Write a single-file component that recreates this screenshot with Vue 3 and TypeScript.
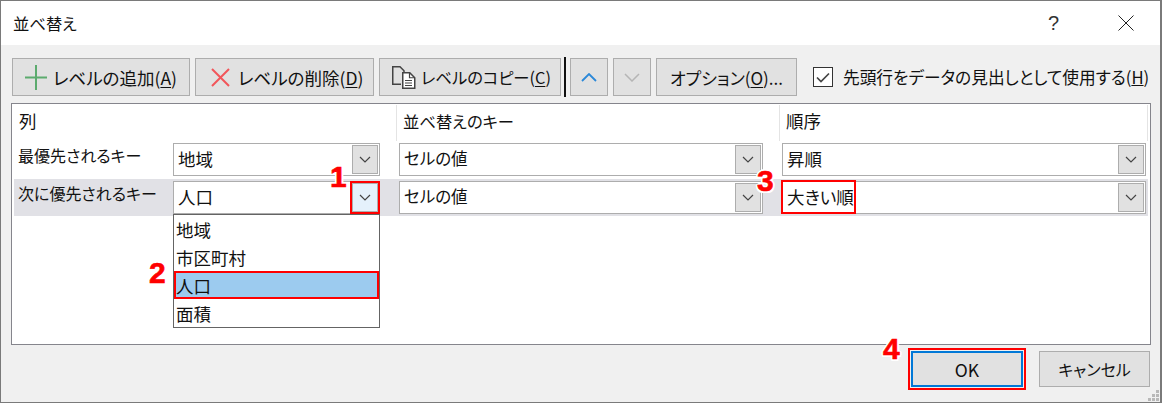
<script setup lang="ts">
interface SortRow {
  label: string
  column: string
  keyType: string
  order: string
  active?: boolean
}

const rows: SortRow[] = [
  { label: '最優先されるキー', column: '地域', keyType: 'セルの値', order: '昇順' },
  { label: '次に優先されるキー', column: '人口', keyType: 'セルの値', order: '大きい順', active: true }
]

const options = ['地域', '市区町村', '人口', '面積']
const gripDots = [
  [2, 0], [1, 1], [2, 1], [0, 2], [1, 2], [2, 2]
]
</script>

<template>
  <div class="dialog">
    <header class="titlebar">
      <span class="title">並べ替え</span>
      <span class="help">?</span>
      <svg class="close" width="16" height="16" viewBox="0 0 16 16">
        <path d="M.5.5l15 15M15.5.5l-15 15" stroke="#222" fill="none" />
      </svg>
    </header>

    <div class="toolbar">
      <button class="btn add">
        <svg width="22" height="25" viewBox="0 0 22 25">
          <path d="M11 0v25M0 12.500h22" stroke="#5cab6e" stroke-width="2" fill="none" />
        </svg>
        <span>レベルの追加(<u>A</u>)</span>
      </button>
      <button class="btn remove">
        <svg width="19" height="19" viewBox="0 0 19 19">
          <path d="M1 1l17 17M18 1L1 18" stroke="#f2555a" stroke-width="2" fill="none" />
        </svg>
        <span>レベルの削除(<u>D</u>)</span>
      </button>
      <button class="btn copy">
        <svg width="24" height="23" viewBox="0 0 24 23">
          <path d="M9 18.250H.750V.750H8l4 4V6" stroke="#444" stroke-width="1.500" fill="none" />
          <path d="M10.750 6.750h7l5 5v10.500h-12z" stroke="#444" stroke-width="1.500" fill="#fff" />
          <path d="M17.500 6.750v5h5M13 14.500h7M13 17h7M13 19.500h7" stroke="#444" stroke-width="1.200" fill="none" />
        </svg>
        <span>レベルのコピー(<u>C</u>)</span>
      </button>
      <i class="divider"></i>
      <button class="btn arrow">
        <svg width="16" height="9" viewBox="0 0 16 9">
          <path d="M1 8l7-7 7 7" stroke="#2b88d8" stroke-width="1.800" fill="none" />
        </svg>
      </button>
      <button class="btn arrow">
        <svg width="16" height="9" viewBox="0 0 16 9">
          <path d="M1 1l7 7 7-7" stroke="#b5b5b5" stroke-width="1.500" fill="none" />
        </svg>
      </button>
      <button class="btn options">オプション(<u>O</u>)...</button>
      <label class="header-check">
        <span class="checkbox">
          <svg width="14" height="11" viewBox="0 0 14 11">
            <path d="M1 5.500l4 4 8-8" stroke="#444" stroke-width="1.700" fill="none" />
          </svg>
        </span>
        <span>先頭行をデータの見出しとして使用する(<u>H</u>)</span>
      </label>
    </div>

    <section class="levels">
      <div class="grid head">
        <div class="cell">列</div>
        <div class="cell key-head">並べ替えのキー</div>
        <div class="cell">順序</div>
      </div>
      <div v-for="row in rows" :key="row.label" class="grid row" :class="{ active: row.active }">
        <div class="col-first">
          <span class="row-label">{{ row.label }}</span>
          <div class="combo narrow">
            <span class="value">{{ row.column }}</span>
            <span class="drop" :class="{ hot: row.active }">
              <svg width="12" height="7" viewBox="0 0 12 7">
                <path d="M1 1l5 5 5-5" stroke="#444" stroke-width="1.200" fill="none" />
              </svg>
            </span>
            <ul v-if="row.active" class="list">
              <li v-for="opt in options" :key="opt" :class="{ picked: opt === row.column }">{{ opt }}</li>
            </ul>
          </div>
        </div>
        <div class="col-key">
          <div class="combo">
            <span class="value">{{ row.keyType }}</span>
            <span class="drop">
              <svg width="12" height="7" viewBox="0 0 12 7">
                <path d="M1 1l5 5 5-5" stroke="#444" stroke-width="1.200" fill="none" />
              </svg>
            </span>
          </div>
        </div>
        <div class="col-order">
          <div class="combo">
            <span class="value">{{ row.order }}</span>
            <i v-if="row.active" class="value-box"></i>
            <span class="drop">
              <svg width="12" height="7" viewBox="0 0 12 7">
                <path d="M1 1l5 5 5-5" stroke="#444" stroke-width="1.200" fill="none" />
              </svg>
            </span>
          </div>
        </div>
      </div>
    </section>

    <footer class="footer">
      <button class="btn ok">OK</button>
      <button class="btn cancel">キャンセル</button>
    </footer>

    <svg class="grip" width="11" height="11" viewBox="0 0 11 11">
      <rect v-for="d in gripDots" :key="d.join()" :x="d[0] * 4" :y="d[1] * 4" width="3" height="3" fill="#b8b8b8" />
    </svg>

    <span class="num n1">1</span>
    <span class="num n2">2</span>
    <span class="num n3">3</span>
    <span class="num n4">4</span>
  </div>
</template>

<style scoped>
.dialog {
  position: relative;
  width: 1162px;
  height: 403px;
  box-sizing: border-box;
  border: 1px solid #7a7a7a;
  border-right-width: 2px;
  background: #f0f0f0;
  color: #111;
  font-family: "Noto Sans CJK JP", "Liberation Sans", sans-serif;
  font-size: 17.5px;
  font-feature-settings: "palt";
  display: flex;
  flex-direction: column;
  overflow: hidden;
}
.titlebar {
  height: 44px;
  flex: none;
  background: #fff;
  display: flex;
  align-items: center;
  padding: 0 26px 0 12px;
}
.title {
  font-size: 16.3px;
  flex: 1;
}
.help {
  font-family: "Liberation Sans", sans-serif;
  font-size: 20px;
  color: #333;
  margin-right: 59px;
}
.toolbar {
  display: flex;
  align-items: center;
  gap: 5px;
  padding: 13px 0 0 11px;
  height: 38px;
  flex: none;
}
.toolbar > * {
  flex: none;
}
.btn {
  box-sizing: border-box;
  height: 38px;
  padding: 0;
  border: 1px solid #adadad;
  background: #e1e1e1;
  color: #111;
  font: inherit;
  font-feature-settings: inherit;
  display: flex;
  align-items: center;
  justify-content: center;
  white-space: nowrap;
}
.btn u {
  text-underline-offset: 2px;
}
.add {
  width: 178px;
  justify-content: flex-start;
  padding-left: 12px;
  gap: 6px;
}
.remove {
  width: 179px;
  justify-content: flex-start;
  padding-left: 15px;
  gap: 8px;
}
.copy {
  width: 182px;
  font-size: 16.3px;
  justify-content: flex-start;
  padding-left: 12px;
  gap: 5px;
}
.divider {
  width: 2px;
  height: 40px;
  background: #111;
  margin: 0 -1px 0 -2px;
}
.arrow {
  width: 38px;
}
.options {
  width: 141px;
  font-size: 17px;
}
.header-check {
  display: flex;
  align-items: center;
  margin-left: 11px;
  font-size: 16.7px;
  white-space: nowrap;
}
.checkbox {
  box-sizing: border-box;
  width: 20px;
  height: 20px;
  border: 1px solid #333;
  background: #fff;
  display: flex;
  align-items: center;
  justify-content: center;
  margin-right: 10px;
}
.levels {
  box-sizing: border-box;
  margin: 7px 9px 0 10px;
  height: 242px;
  border: 1px solid #85858c;
  background: #fff;
  flex: none;
  padding: 1px 2px 0;
}
.grid {
  display: grid;
  grid-template-columns: 382px 383px 369px;
}
.head {
  height: 36px;
}
.head .cell {
  padding: 0 5px;
  line-height: 32px;
}
.head .cell + .cell {
  border-left: 1px solid #e4e4e4;
  padding-left: 6px;
}
.head .cell:last-child {
  border-right: 1px solid #e4e4e4;
}
.head .key-head {
  font-size: 16.3px;
}
.row {
  height: 37px;
  align-items: center;
}
.row.active {
  background: #e1e1e6;
}
.row + .row {
  margin-top: 1px;
}
.col-first {
  display: flex;
  align-items: center;
}
.row-label {
  width: 159px;
  padding: 0 0 9px 4px;
  box-sizing: border-box;
  font-size: 16px;
  white-space: nowrap;
}
.col-key {
  padding-left: 3px;
  padding-right: 16px;
  font-size: 16.5px;
}
.col-order {
  padding-left: 3px;
  padding-right: 2px;
}
.combo {
  position: relative;
  box-sizing: border-box;
  height: 33px;
  border: 1px solid #adadad;
  background: #fff;
  display: flex;
  align-items: center;
  justify-content: space-between;
  padding: 0 1px 0 4px;
}
.value {
  padding-bottom: 3px;
}
.narrow {
  width: 207px;
}
.value-box {
  position: absolute;
  left: -2px;
  top: -2px;
  width: 75px;
  height: 34px;
  box-sizing: border-box;
  border: 2px solid #f00;
}
.drop {
  box-sizing: border-box;
  width: 26px;
  height: 29px;
  border: 1px solid #adadad;
  background: #e1e1e1;
  display: flex;
  align-items: center;
  justify-content: center;
}
.drop.hot {
  background: #e5f1fb;
  outline: 2px solid #f00;
  outline-offset: 0;
}
.list {
  position: absolute;
  left: -1px;
  top: 32px;
  width: 207px;
  box-sizing: border-box;
  margin: 0;
  padding: 0;
  list-style: none;
  background: #fff;
  border: 1px solid #646464;
  z-index: 2;
}
.list li {
  box-sizing: border-box;
  height: 28px;
  line-height: 30px;
  padding-left: 2px;
}
.list li.picked {
  background: #9ccbef;
  outline: 2px solid #f00;
  outline-offset: -2px;
}
.footer {
  display: flex;
  justify-content: flex-end;
  gap: 16px;
  padding: 6px 10px 0 0;
}
.ok {
  width: 112px;
  height: 36px;
  border: 2px solid #0078d7;
  outline: 2px solid #f00;
  outline-offset: 1px;
}
.cancel {
  width: 111px;
  height: 36px;
  font-size: 16px;
}
.grip {
  position: absolute;
  right: 1px;
  bottom: 1px;
}
.num {
  position: absolute;
  z-index: 3;
  font-family: "Liberation Sans", sans-serif;
  font-weight: 700;
  font-size: 30px;
  line-height: 30px;
  color: #f00;
  -webkit-text-stroke: 0.6px #f00;
  text-shadow: 2px 0 0 #fff, -2px 0 0 #fff, 0 2px 0 #fff, 0 -2px 0 #fff, 1.500px 1.500px 0 #fff, -1.500px 1.500px 0 #fff, 1.500px -1.500px 0 #fff, -1.500px -1.500px 0 #fff;
}
.n1 { left: 329px; top: 161px; }
.n2 { left: 148px; top: 257px; }
.n3 { left: 756px; top: 165px; }
.n4 { left: 882px; top: 333px; }
</style>

<style>
html, body {
  margin: 0;
  background: #fff;
  overflow: hidden;
}
</style>
